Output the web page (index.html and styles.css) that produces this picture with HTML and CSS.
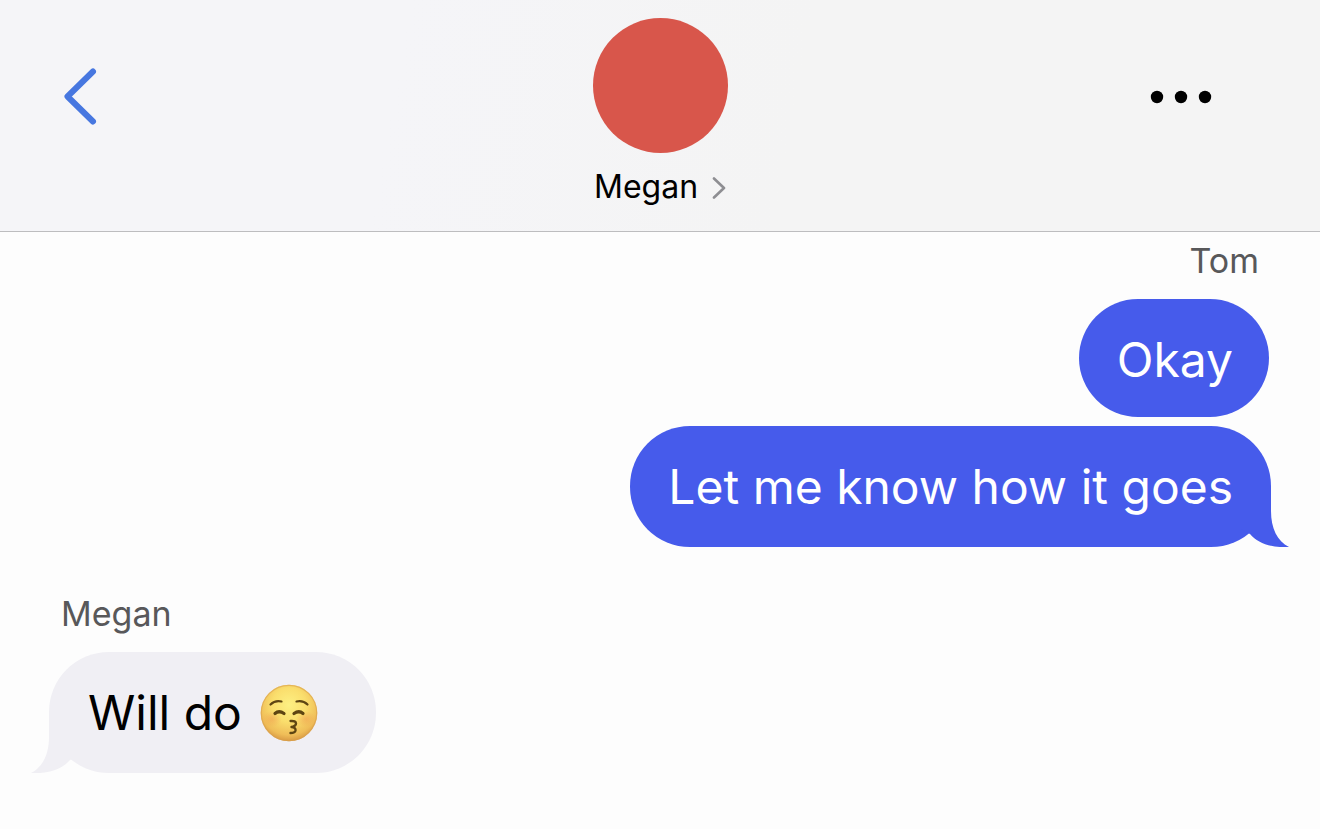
FILE: index.html
```html
<!DOCTYPE html>
<html lang="en">
<head>
<meta charset="utf-8">
<meta name="viewport" content="width=device-width, initial-scale=1">
<title>Megan</title>
<link rel="stylesheet" href="styles.css">
</head>
<body>
<header class="topbar">
  <button class="icon-button back" type="button" aria-label="Back">
    <svg width="36" height="60" viewBox="0 0 36 60" fill="none" stroke="#4777e0" stroke-width="6" stroke-linecap="round" stroke-linejoin="round"><path d="M31 5.500 5.500 30.500 31 55.500"/></svg>
  </button>
  <a class="contact" href="#contact">
    <span class="avatar"></span>
    <span class="contact-name">Megan
      <svg width="14" height="22" viewBox="0 0 14 22" fill="none" stroke="#8e8e92" stroke-width="2.600" stroke-linecap="round" stroke-linejoin="round" aria-hidden="true"><path d="M2 1.500 12 11 2 20.500"/></svg>
    </span>
  </a>
  <button class="icon-button more" type="button" aria-label="More options">
    <svg width="62" height="14" viewBox="0 0 62 14"><circle cx="7" cy="7" r="6.200"/><circle cx="31" cy="7" r="6.200"/><circle cx="55" cy="7" r="6.200"/></svg>
  </button>
</header>
<main class="thread">
  <section class="group sent">
    <h2 class="sender">Tom</h2>
    <p class="bubble short">Okay</p>
    <p class="bubble">Let me know how it goes
      <svg class="tail" width="48" height="68" viewBox="0 0 48 68" aria-hidden="true"><path d="M0 8H30V32C30 49 36 62 48 68C29 69 17 64 9 55L0 50Z"/></svg>
    </p>
  </section>
  <section class="group received">
    <h2 class="sender">Megan</h2>
    <p class="bubble">Will do
      <svg class="emoji" width="58" height="58" viewBox="0 0 58 58" role="img" aria-label="Kissing face with closed eyes">
        <defs>
          <radialGradient id="skin" cx="50%" cy="36%" r="66%">
            <stop offset="0" stop-color="#fdf083"/>
            <stop offset=".45" stop-color="#fade6d"/>
            <stop offset=".8" stop-color="#efbd58"/>
            <stop offset="1" stop-color="#d4933f"/>
          </radialGradient>
          <radialGradient id="blush">
            <stop offset="0" stop-color="#f09a50" stop-opacity=".5"/>
            <stop offset="1" stop-color="#f09a50" stop-opacity="0"/>
          </radialGradient>
        </defs>
        <circle cx="29" cy="29" r="28.300" fill="url(#skin)"/>
        <circle cx="29" cy="29" r="27.700" fill="none" stroke="#d9a04c" stroke-opacity=".6" stroke-width="1.200"/>
        <ellipse cx="12" cy="35" rx="10" ry="8" fill="url(#blush)"/>
        <ellipse cx="46" cy="35" rx="10" ry="8" fill="url(#blush)"/>
        <g fill="none" stroke="#5e4512" stroke-linecap="round" stroke-linejoin="round">
          <path stroke-width="2.200" d="M10.500 20.500Q15 16 21.500 17.500M36.500 17.500Q43 16 47.500 20.500"/>
          <path stroke-width="3.200" d="M15 29.500Q19 26 24 29.500M34 29.500Q39 26 43 29.500"/>
          <path stroke-width="2.400" d="M30.500 37Q36 36.500 36 39.500Q36 42 31.500 43Q36 43.500 35.500 46.500Q35 49 30.500 49"/>
        </g>
      </svg>
      <svg class="tail" width="48" height="68" viewBox="0 0 48 68" aria-hidden="true"><path d="M0 8H30V32C30 49 36 62 48 68C29 69 17 64 9 55L0 50Z"/></svg>
    </p>
  </section>
</main>
</body>
</html>
```
FILE: styles.css
```css
* {
  box-sizing: border-box;
}

body {
  margin: 0;
  background: #fdfdfd;
  color: #000;
  font-family: Inter, "Liberation Sans", sans-serif;
}

.topbar {
  display: grid;
  grid-template-columns: 1fr auto 1fr;
  align-items: start;
  padding: 18px 60px 26px;
  border-bottom: 1px solid #bdbdbf;
  background: linear-gradient(100deg, #f5f5f8 30%, #f4f4f4 60%);
}

.icon-button {
  display: flex;
  padding: 0;
  border: 0;
  background: none;
  cursor: pointer;
}

.back {
  justify-self: start;
  margin: 48px 0 0 2px;
}

.more {
  justify-self: end;
  margin: 72px 48px 0 0;
}

.contact {
  display: flex;
  flex-direction: column;
  align-items: center;
  gap: 15px;
  color: #000;
  text-decoration: none;
}

.avatar {
  width: 135px;
  height: 135px;
  border-radius: 50%;
  background: #d8564b;
}

.contact-name {
  display: flex;
  align-items: center;
  gap: 14px;
  font-size: 32px;
  line-height: 37px;
}

.contact-name svg {
  margin-top: 3px;
}

.thread {
  display: flex;
  flex-direction: column;
  gap: 46px;
  padding: 8px 49px 56px;
}

.group {
  display: flex;
  flex-direction: column;
  align-items: flex-start;
}

.sent {
  align-items: flex-end;
}

.sender {
  margin: 0 12px 17px;
  color: #58585a;
  font-size: 34px;
  font-weight: 400;
  line-height: 42px;
}

.bubble {
  position: relative;
  display: flex;
  align-items: center;
  gap: 18px;
  margin: 0;
  padding: 30px 38px;
  border-radius: 60px;
  font-size: 48px;
  line-height: 61px;
}

.bubble.short {
  margin: 0 2px 9px 0;
  padding: 30px 36px 27px 38px;
}

.sent .bubble {
  background: #465beb;
  color: #fff;
  fill: #465beb;
}

.received .bubble {
  padding-right: 58px;
  padding-left: 39px;
  background: #f0eff4;
  fill: #f0eff4;
}

.tail {
  position: absolute;
  right: -18px;
  bottom: 0;
}

.received .tail {
  right: auto;
  left: -18px;
  transform: scaleX(-1);
}
```
